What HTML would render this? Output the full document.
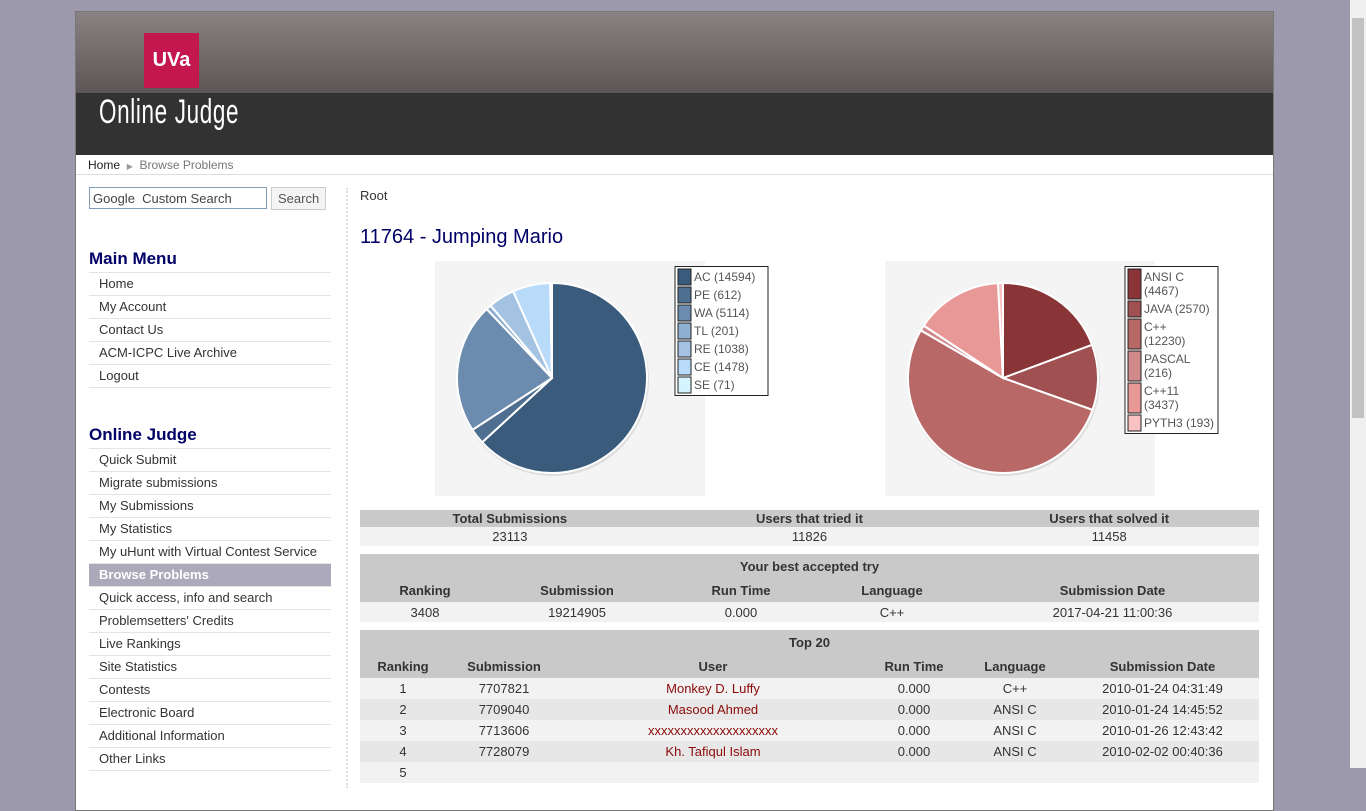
<!DOCTYPE html>
<html><head><meta charset="utf-8"><style>
*{box-sizing:border-box}
body{margin:0;width:1366px;height:768px;overflow:hidden;background:#9b99ab;font-family:"Liberation Sans",sans-serif;font-size:13px;color:#333}
#sb{position:absolute;left:1350px;top:0;width:16px;height:768px;background:#f0f0f0}
#sb div{position:absolute;left:2px;top:18px;width:12px;height:400px;background:#c2c2c2}
#wrap{position:absolute;left:75px;top:11px;width:1199px;height:800px;background:#fff;border:1px solid #777}
#hdr{height:81px;background:linear-gradient(#8a8282,#5d5656)}
#logo{position:absolute;left:68px;top:21px;width:55px;height:55px;background:#c4174f;color:#fff;font-weight:bold;font-size:20px;text-align:center;line-height:55px}
#band{height:62px;background:#323232;position:relative}
#band span{position:absolute;left:23px;top:0;color:#fff;font-size:34px;font-family:"Liberation Sans Narrow","Liberation Sans",sans-serif;font-weight:normal;transform:scaleX(.66);transform-origin:left;letter-spacing:1px}
#bc{height:20px;border-bottom:1px solid #ddd;font-size:12px;padding:3px 0 0 12px;color:#777}
#bc b{font-weight:normal;color:#222}
#side{position:absolute;left:13px;top:175px;width:242px}
.srch input{width:178px;height:22px;border:1px solid #7f9db9;font-size:13px;color:#555;padding:0 3px}
.srch button{position:absolute;left:182px;top:0;height:23px;width:55px;border:1px solid #ccc;background:#f4f4f4;font-size:13px;color:#555;font-family:inherit}
h2{font-size:17px;color:#000066;margin:0;height:25px;line-height:22px;border-bottom:1px solid #e4e4e4}
.m{height:23px;line-height:22px;border-bottom:1px solid #e4e4e4;padding-left:10px;color:#333}
.m.a{background:#aba9ba;color:#fff;font-weight:bold}
#div{position:absolute;left:270px;top:176px;height:600px;border-left:2px dotted #ddd}
#main{position:absolute;left:284px;top:175px;width:900px}
h1{font-size:20px;font-weight:normal;color:#000066;margin:0}
table{border-collapse:collapse;table-layout:fixed;width:899px;position:absolute;left:0}
td,th{text-align:center;padding:0;font-size:13px}
th{background:#c9c9c9;color:#333}
.u{color:#8b0a0a}
</style></head><body>
<div id="sb"><div></div></div>
<div id="wrap">
<div id="hdr"><div id="logo">UVa</div></div>
<div id="band"><span>Online Judge</span></div>
<div id="bc"><b>Home</b> &nbsp;<span style="font-size:8px;color:#999">▶</span>&nbsp; Browse Problems</div>
<div id="side">
<div class="srch" style="position:relative;height:23px"><input value="Google  Custom Search" style="color:#444"><button>Search</button></div>
<div style="height:38px"></div>
<h2>Main Menu</h2>
<div class="m">Home</div><div class="m">My Account</div><div class="m">Contact Us</div><div class="m">ACM-ICPC Live Archive</div><div class="m">Logout</div>
<div style="height:36px"></div>
<h2>Online Judge</h2>
<div class="m">Quick Submit</div><div class="m">Migrate submissions</div><div class="m">My Submissions</div><div class="m">My Statistics</div><div class="m">My uHunt with Virtual Contest Service</div><div class="m a">Browse Problems</div><div class="m">Quick access, info and search</div><div class="m">Problemsetters' Credits</div><div class="m">Live Rankings</div><div class="m">Site Statistics</div><div class="m">Contests</div><div class="m">Electronic Board</div><div class="m">Additional Information</div><div class="m">Other Links</div>
</div>
<div id="div"></div>
<div id="main">
<div style="position:absolute;top:1px;font-size:13px">Root</div>
<h1 style="position:absolute;top:39px">11764 - Jumping Mario</h1>
<svg style="position:absolute;left:0;top:62px" width="900" height="250" id="sv"></svg>
<table style="top:323px"><colgroup><col><col><col></colgroup>
<tr style="height:17px"><th>Total Submissions</th><th>Users that tried it</th><th>Users that solved it</th></tr>
<tr style="height:19px;background:#f2f2f2"><td>23113</td><td>11826</td><td>11458</td></tr></table>
<table style="top:367px"><colgroup><col style="width:130px"><col style="width:174px"><col style="width:154px"><col style="width:148px"><col></colgroup>
<tr style="height:24px"><th colspan="5">Your best accepted try</th></tr>
<tr style="height:24px"><th>Ranking</th><th>Submission</th><th>Run Time</th><th>Language</th><th>Submission Date</th></tr>
<tr style="height:20px;background:#f2f2f2"><td>3408</td><td>19214905</td><td>0.000</td><td>C++</td><td>2017-04-21 11:00:36</td></tr></table>
<table style="top:443px"><colgroup><col style="width:86px"><col style="width:116px"><col style="width:302px"><col style="width:100px"><col style="width:102px"><col></colgroup>
<tr style="height:24px"><th colspan="6">Top 20</th></tr>
<tr style="height:24px"><th>Ranking</th><th>Submission</th><th>User</th><th>Run Time</th><th>Language</th><th>Submission Date</th></tr>
<tr style="height:21px;background:#f2f2f2"><td>1</td><td>7707821</td><td class="u">Monkey D. Luffy</td><td>0.000</td><td>C++</td><td>2010-01-24 04:31:49</td></tr>
<tr style="height:21px;background:#e7e7e7"><td>2</td><td>7709040</td><td class="u">Masood Ahmed</td><td>0.000</td><td>ANSI C</td><td>2010-01-24 14:45:52</td></tr>
<tr style="height:21px;background:#f2f2f2"><td>3</td><td>7713606</td><td class="u">xxxxxxxxxxxxxxxxxxxx</td><td>0.000</td><td>ANSI C</td><td>2010-01-26 12:43:42</td></tr>
<tr style="height:21px;background:#e7e7e7"><td>4</td><td>7728079</td><td class="u">Kh. Tafiqul Islam</td><td>0.000</td><td>ANSI C</td><td>2010-02-02 00:40:36</td></tr>
<tr style="height:21px;background:#f2f2f2"><td>5</td><td></td><td></td><td></td><td></td><td></td></tr>
</table>
</div>
</div>
<script>
var sv=document.getElementById('sv'),h='';
function pie(bx,cx,cy,r,vals,cols,labels,lx,lw){
 h+='<rect x="'+bx+'" y="12" width="270" height="235" fill="#f4f4f4"/>';
 h+='<circle cx="'+(cx+1)+'" cy="'+(cy+2)+'" r="'+(r+1)+'" fill="#ddd"/>';
 var t=vals.reduce((a,b)=>a+b,0),a=-Math.PI/2;
 vals.forEach(function(v,i){var b=a+v/t*2*Math.PI;
  var x1=cx+r*Math.cos(a),y1=cy+r*Math.sin(a),x2=cx+r*Math.cos(b),y2=cy+r*Math.sin(b);
  h+='<path d="M'+cx+' '+cy+'L'+x1+' '+y1+'A'+r+' '+r+' 0 '+((b-a)>Math.PI?1:0)+' 1 '+x2+' '+y2+'Z" fill="'+cols[i]+'" stroke="#fff" stroke-width="2"/>';a=b;});
 var hh=0;labels.forEach(function(l){hh+=l.length*14+4});
 h+='<rect x="'+lx+'" y="17.5" width="'+lw+'" height="'+(hh+3)+'" fill="#fff" stroke="#222"/>';
 var y=20;
 labels.forEach(function(l,i){var hgt=l.length*14+2;
  h+='<rect x="'+(lx+3)+'" y="'+y+'" width="13" height="'+hgt+'" fill="'+cols[i]+'" stroke="#222"/>';
  l.forEach(function(s,j){h+='<text x="'+(lx+19)+'" y="'+(y+12+j*14)+'" font-size="12" fill="#555" font-family="Liberation Sans">'+s+'</text>'});
  y+=hgt+2;});
}
pie(75,192,129,95,[14594,612,5114,201,1038,1478,71],['#3b5b7c','#4f6f90','#6b8caf','#8eafd0','#a4c3e3','#b9dbfa','#d4f4fe'],[['AC (14594)'],['PE (612)'],['WA (5114)'],['TL (201)'],['RE (1038)'],['CE (1478)'],['SE (71)']],315,93);
pie(525,643,129,95,[4467,2570,12230,216,3437,193],['#893437','#a05050','#b96868','#d08a8a','#e99898','#f9c1c1'],[['ANSI C','(4467)'],['JAVA (2570)'],['C++','(12230)'],['PASCAL','(216)'],['C++11','(3437)'],['PYTH3 (193)']],765,93);
sv.innerHTML=h;
</script>
</body></html>
